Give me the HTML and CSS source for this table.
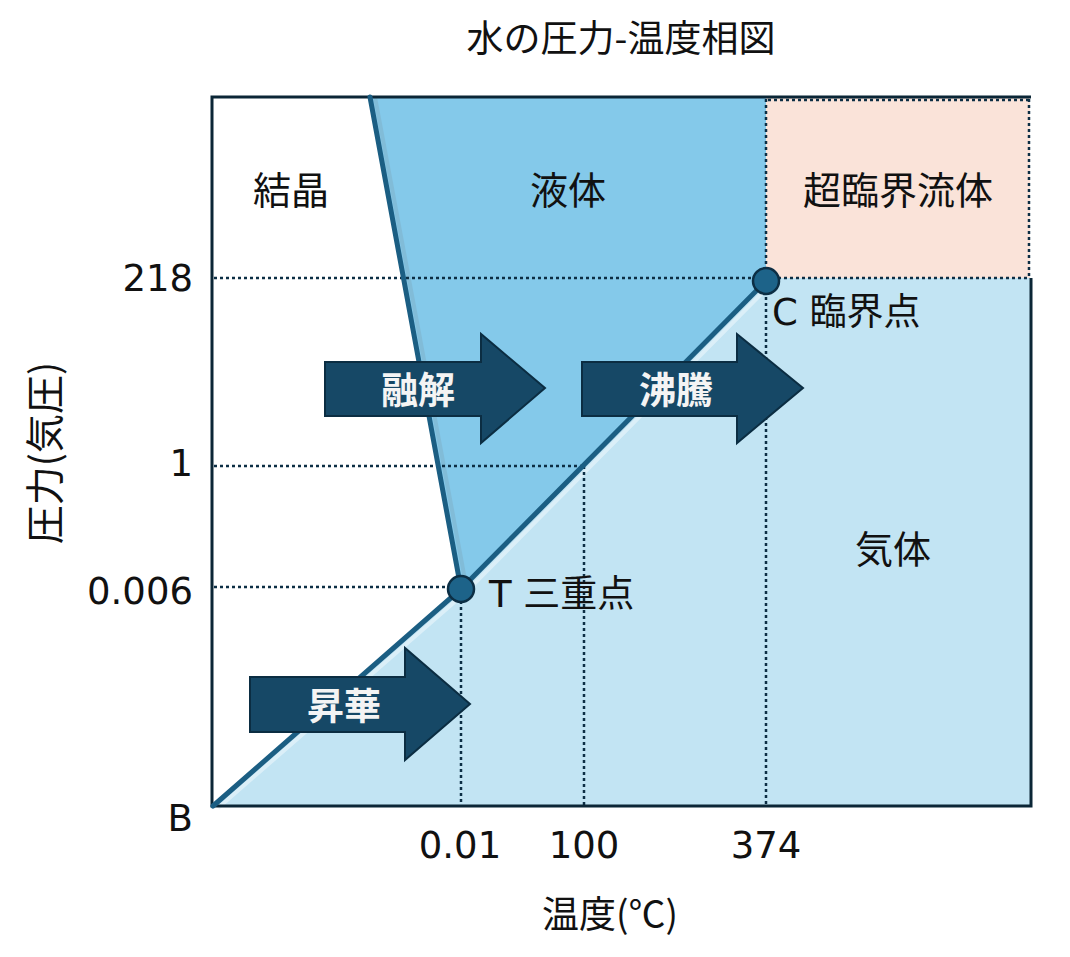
FILE: index.html
```html
<!DOCTYPE html>
<html lang="ja">
<head>
<meta charset="utf-8">
<title>水の圧力-温度相図</title>
<link rel="stylesheet" href="styles.css">
</head>
<body>
<div class="page">
  <h1 class="title">水の圧力-温度相図</h1>
  <svg class="chart" width="1070" height="883" viewBox="0 74 1070 883" xmlns="http://www.w3.org/2000/svg">
    <!-- regions -->
    <rect class="solid-region" x="212" y="97" width="818" height="709"/>
    <rect class="super-region" x="766" y="97" width="264" height="181"/>
    <polygon class="liquid-region" points="370,97 766,97 766,280 461,589"/>
    <polygon class="gas-region" points="213,806 461,589 766,280 766,278 1030,278 1030,806"/>

    <!-- soft highlights along boundaries -->
    <line class="glow" x1="218" y1="808" x2="466" y2="592"/>
    <line class="glow" x1="466" y1="592" x2="770" y2="285"/>
    <line class="shade" x1="375" y1="97" x2="466" y2="585"/>

    <!-- dotted guides -->
    <line class="dot" x1="214" y1="278" x2="1030" y2="278"/>
    <line class="dot" x1="214" y1="466" x2="584" y2="466"/>
    <line class="dot" x1="214" y1="587" x2="461" y2="587"/>
    <line class="dot" x1="461" y1="589" x2="461" y2="805"/>
    <line class="dot" x1="584" y1="466" x2="584" y2="805"/>
    <line class="dot" x1="766" y1="99" x2="766" y2="805"/>
    <line class="dot" x1="1029" y1="99" x2="1029" y2="278"/>
    <line class="dot" x1="768" y1="100" x2="1029" y2="100"/>

    <!-- frame -->
    <polyline class="frame" points="1031,97 212,97 212,806 1031,806 1031,278"/>

    <!-- phase boundaries -->
    <line class="phase" x1="370" y1="97" x2="461" y2="589"/>
    <line class="phase" x1="213" y1="806" x2="461" y2="589"/>
    <line class="phase" x1="461" y1="589" x2="766" y2="281"/>

    <!-- points -->
    <circle class="pt" cx="766" cy="281" r="13"/>
    <circle class="pt" cx="461" cy="589" r="13"/>

    <!-- arrows -->
    <polygon class="arrow" points="325,362 481,362 481,334 545,388 481,443 481,416 325,416"/>
    <polygon class="arrow" points="582,362 737,362 737,334 803,388 737,443 737,416 582,416"/>
    <polygon class="arrow" points="250,677 405,677 405,648 470,704 405,760 405,732 250,732"/>
    <text class="arrow-label" x="418" y="388">融解</text>
    <text class="arrow-label" x="676" y="388">沸騰</text>
    <text class="arrow-label" x="344" y="704">昇華</text>

    <!-- region labels -->
    <text class="region-label" x="291" y="187">結晶</text>
    <text class="region-label" x="568" y="187">液体</text>
    <text class="region-label" x="898" y="187">超臨界流体</text>
    <text class="region-label" x="893" y="546">気体</text>
    <text class="point-label" x="772" y="312">C 臨界点</text>
    <text class="point-label" x="489" y="594">T 三重点</text>

    <!-- axes ticks -->
    <text class="tick tick-y" x="193" y="278">218</text>
    <text class="tick tick-y" x="193" y="463">1</text>
    <text class="tick tick-y" x="193" y="591">0.006</text>
    <text class="tick tick-y" x="193" y="818">B</text>
    <text class="tick tick-x" x="460" y="845">0.01</text>
    <text class="tick tick-x" x="584" y="845">100</text>
    <text class="tick tick-x" x="766" y="845">374</text>

    <text class="axis-title" x="610" y="912">温度(℃)</text>
    <text class="axis-title axis-y" x="42" y="453" transform="rotate(-90 42 453)">圧力(気圧)</text>
  </svg>
</div>
</body>
</html>
```
FILE: styles.css
```css
html, body {
  margin: 0;
  padding: 0;
  background: #ffffff;
}

body {
  font-family: "DejaVu Sans", "Noto Sans CJK JP", sans-serif;
  color: #111111;
  overflow: hidden;
}

.page {
  width: 1070px;
  height: 957px;
  display: flex;
  flex-direction: column;
}

.title {
  box-sizing: border-box;
  margin: 0;
  width: 1030px;
  height: 74px;
  padding-left: 212px;
  line-height: 72px;
  text-align: center;
  font-family: "Noto Sans CJK JP", sans-serif;
  font-size: 37px;
  font-weight: 400;
  color: #111111;
}

.chart {
  display: block;
}

.solid-region { fill: #ffffff; }
.super-region { fill: #fae3d9; }
.liquid-region { fill: #84c9ea; }
.gas-region { fill: #c2e4f3; }

.glow {
  stroke: #e6f4fb;
  stroke-width: 4;
  opacity: 0.7;
}
.shade {
  stroke: #7fa9bf;
  stroke-width: 4;
  opacity: 0.4;
}

.dot {
  stroke: #0c2e44;
  stroke-width: 2.5;
  stroke-dasharray: 3 3;
  fill: none;
}

.frame {
  fill: none;
  stroke: #0b2636;
  stroke-width: 3;
}

.phase {
  stroke: #1b5e83;
  stroke-width: 5;
  stroke-linecap: round;
}

.pt {
  fill: #1d6389;
  stroke: #0c2e44;
  stroke-width: 2.5;
}

.arrow {
  fill: #164866;
  stroke: #0b2d42;
  stroke-width: 2;
  stroke-linejoin: miter;
}

.arrow-label {
  font-family: "Noto Sans CJK JP", sans-serif;
  font-size: 37px;
  font-weight: 700;
  fill: #f4f4f4;
  text-anchor: middle;
  dominant-baseline: central;
}

.region-label {
  font-family: "Noto Sans CJK JP", sans-serif;
  font-size: 38px;
  fill: #111111;
  text-anchor: middle;
  dominant-baseline: central;
}

.point-label {
  font-family: "DejaVu Sans", "Noto Sans CJK JP", sans-serif;
  font-size: 37px;
  fill: #111111;
  dominant-baseline: central;
}

.tick {
  font-family: "DejaVu Sans", sans-serif;
  font-size: 37px;
  fill: #111111;
  dominant-baseline: central;
}
.tick-y { text-anchor: end; }
.tick-x { text-anchor: middle; }

.axis-title {
  font-family: "Noto Sans CJK JP", sans-serif;
  font-size: 37px;
  fill: #111111;
  text-anchor: middle;
  dominant-baseline: central;
}

.axis-y {
  font-size: 39px;
}
```
